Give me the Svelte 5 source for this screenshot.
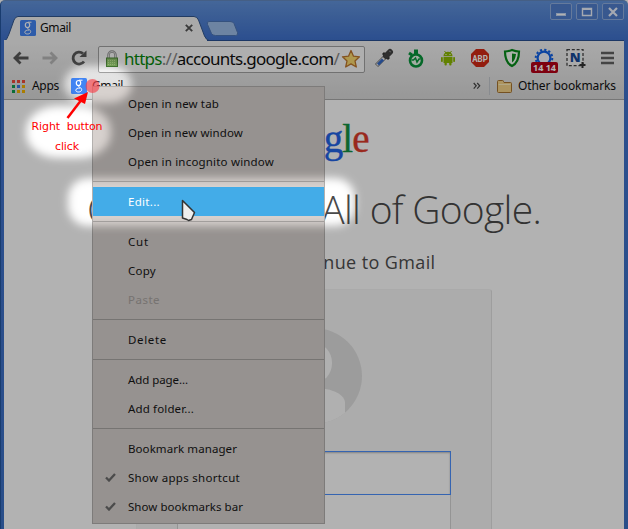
<script>
  const groups = [
    [
      { label: 'Open in new tab', w: 91 },
      { label: 'Open in new window', w: 115 },
      { label: 'Open in incognito window', w: 146 }
    ],
    [{ label: 'Edit...', w: 32, active: true }],
    [
      { label: 'Cut', w: 21 },
      { label: 'Copy', w: 28 },
      { label: 'Paste', w: 32, disabled: true }
    ],
    [{ label: 'Delete', w: 39 }],
    [
      { label: 'Add page...', w: 60 },
      { label: 'Add folder...', w: 66 }
    ],
    [
      { label: 'Bookmark manager', w: 109 },
      { label: 'Show apps shortcut', w: 112, checked: true },
      { label: 'Show bookmarks bar', w: 115, checked: true }
    ]
  ];
  const appColors = ['#f04a3c', '#f04a3c', '#f04a3c', '#0f9d50', '#3c78e8', '#f4b400', '#0f9d50', '#f4b400', '#f4b400'];

  // Tracks the label out so that it spans the given width.
  function fit(node, width) {
    const n = node.textContent.length;
    node.style.letterSpacing = (width - node.getBoundingClientRect().width) / n + 'px';
  }
</script>

{#snippet favicon()}
  <svg width="16" height="16" viewBox="0 0 16 16">
    <rect width="16" height="16" rx="1.5" fill="#4285f4" />
    <g fill="none" stroke="#fff">
      <ellipse cx="7.500" cy="5" rx="2.200" ry="2.500" stroke-width="1.200" />
      <path d="M8 2.200h3.500M8.500 7.300c-1.600 1-.6 1.600.5 2.200 1.500.8 2 1.700 1.500 2.900-.8 2.200-5.500 2.100-5.700 0-.1-1.800 2.200-2.500 4.200-2.300" stroke-width="1" />
    </g>
  </svg>
{/snippet}

<div class="window">
  <header>
    <svg class="tabs" width="250" height="25" viewBox="0 0 250 25">
      <path d="M0 25C3 24 3 22 5 18L10 4Q11.500 .5 14 .5H190Q193 .5 194.500 4L200.500 20Q202 24 206 25Z" fill="#f3f3f3" stroke="#31578f" />
      <path d="M205 5.500h21q3 0 4 2l3.500 9q1 3-2 3h-20q-3 0-4-2l-4-9q-1-3 1.500-3z" fill="#9dbde8" stroke="#4d76b5" />
    </svg>
    <div class="tab">{@render favicon()}<span use:fit={31}>Gmail</span>
      <svg width="8" height="8" viewBox="0 0 8 8"><path d="M.8.8 7.200 7.200M7.200.8.8 7.200" stroke="#555" stroke-width="1.900" /></svg>
    </div>
    <div class="controls">
      <i><svg viewBox="0 0 20 15"><rect x="5.500" y="9.500" width="9" height="2" fill="#fff" stroke="#c5d7f4" /></svg></i>
      <i><svg viewBox="0 0 20 15"><path d="M5.500 4.500h9v7h-9z" fill="none" stroke="#edf3fe" stroke-width="1.400" /><path d="M5 5h10" stroke="#edf3fe" stroke-width="2" /></svg></i>
      <i><svg viewBox="0 0 20 15"><path d="m6 4 8 8m0-8-8 8" stroke="#edf3fe" stroke-width="2.200" /></svg></i>
    </div>
  </header>

  <div class="chrome">
    <div class="toolbar">
      <svg class="nav" width="76" height="20" viewBox="0 0 76 20" fill="none" stroke-width="2.800">
        <path d="M17.500 10H4M9.500 4.500 4 10l5.500 5.500" stroke="#595959" />
        <path d="M31.500 10h14M39.500 4.500l5.500 5.500-5.500 5.500" stroke="#b9b9b9" />
        <path d="M73 13.500A6 6 0 1 1 72 5.500" stroke="#595959" />
        <path d="M75.500 2.500v6.500h-7z" fill="#595959" />
      </svg>
      <div class="url">
        <svg width="14" height="18" viewBox="0 0 14 18">
          <path d="M3.500 9V5a3.500 3.500 0 0 1 7 0v4" fill="none" stroke="#969696" stroke-width="2.500" />
          <path d="M3.500 9V5a3.500 3.500 0 0 1 7 0v4" fill="none" stroke="#ddd" />
          <rect x="1.500" y="8" width="11" height="8.500" fill="#8fc36c" stroke="#4f8839" />
          <path d="M3 10.500h8M3 12.500h8M3 14.500h8" stroke="#b8df8d" stroke-dasharray="1 1" />
        </svg>
        <span class="address" use:fit={215}><b>https</b><em>://</em>accounts.google.com<em>/</em></span>
        <svg class="star" width="20" height="20" viewBox="0 0 20 20"><path d="m10 1.500 2.500 5.700 6 .6-4.500 4.100 1.300 6.100L10 14.900 4.700 18 6 11.900 1.500 7.800l6-.6z" fill="#fbda70" stroke="#bd762d" stroke-width="1.300" stroke-linejoin="round" /></svg>
      </div>
      <div class="extensions">
        <svg width="20" height="20" viewBox="0 0 20 20">
          <path d="m2.500 17.500 9-9" stroke="#777" stroke-width="4.500" /><path d="m3 17 8-8" stroke="#f2f2f2" stroke-width="2.600" /><path d="m4 16.500 5-5" stroke="#3469c7" stroke-width="2.800" />
          <path d="m9 5 6 6" stroke="#333" stroke-width="2.800" /><path d="m12 8 4-4" stroke="#444" stroke-width="6" stroke-linecap="round" /><path d="m15 3 2 1" stroke="#888" />
        </svg>
        <svg width="20" height="20" viewBox="0 0 20 20" fill="none" stroke="#08963b">
          <circle cx="10" cy="12.500" r="6" fill="#e8f7e9" stroke-width="2.600" /><path d="M10 6V1.500" stroke-width="4" /><path d="m3 5 3 2" stroke-width="3" /><path d="M5.500 12h2l2-2 1.500 4 2-3h1.500" stroke-width="1.500" />
        </svg>
        <svg width="20" height="20" viewBox="0 0 20 20" fill="#8bb900">
          <path d="M5.500 8a4.500 4.200 0 0 1 9 0zM5.500 8.800h9V15h-9z" /><rect x="3" y="9" width="1.800" height="5" rx=".8" /><rect x="15.200" y="9" width="1.800" height="5" rx=".8" /><rect x="6.500" y="14" width="2.300" height="3.500" rx="1" /><rect x="11.200" y="14" width="2.300" height="3.500" rx="1" />
          <path d="m6.500 3 1.500 2m5.500-2-1.500 2" stroke="#8bb900" /><path d="M7.500 6.500h1m3 0h1" stroke="#fff" />
        </svg>
        <svg width="20" height="20" viewBox="0 0 20 20">
          <path d="M6 1h8l5 5v8l-5 5H6l-5-5V6z" fill="#d32a16" /><text x="2.200" y="13.500" textLength="15.600" lengthAdjust="spacingAndGlyphs" fill="#fff" font-family="Roboto" font-size="9.500" font-weight="700">ABP</text>
        </svg>
        <svg width="20" height="20" viewBox="0 0 20 20">
          <path d="M10 2q-4 1.500-7 1.500c0 8 2 12 7 14.500 5-2.500 7-6.500 7-14.500Q14 3.500 10 2z" fill="#f7fff7" stroke="#078b1b" stroke-width="2.200" /><path d="M10 5.500v9c2.500-2 3.500-4.500 4-8.500z" fill="#078b1b" />
        </svg>
        <div class="gear">
          <svg width="20" height="20" viewBox="0 0 20 20"><circle cx="10" cy="10" r="8.300" fill="none" stroke="#1262e8" stroke-width="2" stroke-dasharray="2.200 2.140" /><circle cx="10" cy="10" r="6.400" fill="#f5f7ff" stroke="#1262e8" stroke-width="2.200" /></svg>
          <span>14 14</span>
        </div>
        <svg width="20" height="20" viewBox="0 0 20 20">
          <rect x="1" y="1.700" width="16" height="16" fill="#f4f4f4" stroke="#444" stroke-width="1.300" stroke-dasharray="3 1.800" /><text x="3.800" y="14" font-family="Open Sans" font-weight="800" font-size="13" fill="#164a9a">N</text><path d="M16.500 14v6m-3-3h6" stroke="#333" stroke-width="2" />
        </svg>
      </div>
      <svg class="burger" width="14" height="14" viewBox="0 0 14 14"><path d="M0 2h13M0 7h13M0 12h13" stroke="#626262" stroke-width="2.500" /></svg>
    </div>
    <div class="bookmarks">
      <div class="apps">{#each appColors as color}<i style:background={color}></i>{/each}</div>
      <span use:fit={27}>Apps</span>
      <div class="gmail">{@render favicon()}<span use:fit={31}>Gmail</span></div>
      <div class="other">
        <svg width="8" height="8" viewBox="0 0 8 8"><path d="m.7 1 2.500 2.800L.7 6.600M4.200 1l2.500 2.800-2.500 2.800" fill="none" stroke="#444" stroke-width="1.200" /></svg>
        <hr />
        <svg class="folder" width="15" height="13" viewBox="0 0 15 13"><path d="M1.500 12.500q-1 0-1-1V1.500q0-1 1-1h4q1 0 1 1l.5 1h6.500q1 0 1 1v8q0 1-1 1z" fill="#f6d58a" stroke="#a87532" /><path d="M1.500 4.500h12" stroke="#fff0bf" /></svg>
        <span use:fit={98}>Other bookmarks</span>
      </div>
    </div>
  </div>

  <main>
    <div class="logo" use:fit={109}><span class="b">G</span><span class="r">o</span><span class="y">o</span><span class="b">g</span><span class="g">l</span><span class="r">e</span></div>
    <h1><span use:fit={454}>One account. All of Google.</span></h1>
    <h2><span use:fit={242}>Sign in to continue to Gmail</span></h2>
    <section>
      <svg width="96" height="96" viewBox="0 0 96 96">
        <defs><clipPath id="avatar"><circle cx="48" cy="48" r="48" /></clipPath></defs>
        <g clip-path="url(#avatar)"><path fill="#e0e0e0" d="M0 0h96v96H0z" /><ellipse cx="48" cy="35" rx="18" ry="20" fill="#fdfdfd" /><path d="M17 96V75c0-8 12-15 31-15s31 7 31 15v21z" fill="#fdfdfd" /></g>
      </svg>
      <div class="email"></div>
      <div class="password"></div>
    </section>
  </main>
</div>

<div class="menu">
  {#each groups as group}
    <div class="group">
      {#each group as item}
        <div class="item" class:active={item.active} class:disabled={item.disabled}>
          <div class="check">{#if item.checked}<svg width="11" height="9" viewBox="0 0 11 9"><path d="m1 4.500 3 3L10 1" fill="none" stroke="#6c6c6c" stroke-width="2.300" /></svg>{/if}</div>
          <span use:fit={item.w}>{item.label}</span>
        </div>
      {/each}
    </div>
  {/each}
</div>

<svg class="overlay" width="628" height="529" viewBox="0 0 628 529">
  <defs>
    <filter id="soft" x="-30%" y="-50%" width="160%" height="200%"><feGaussianBlur stdDeviation="4" /></filter>
    <mask id="spots" maskUnits="userSpaceOnUse" x="0" y="0" width="628" height="529">
      <path fill="#fff" d="M0 0h628v529H0z" />
      <g fill="#000" filter="url(#soft)">
        <rect x="64" y="66" width="68" height="37" rx="24" ry="18" />
        <rect x="26" y="106" width="85" height="52" rx="32" ry="24" />
        <rect x="68" y="178" width="287" height="48" rx="20" />
      </g>
    </mask>
  </defs>
  <path d="M0 0h628v529H0z" fill="#000" fill-opacity=".3" mask="url(#spots)" />
  <circle cx="92.500" cy="86" r="7" fill="#f83f48" fill-opacity=".65" />
  <path d="m67.500 118 13-17" stroke="#f00" stroke-width="2.500" />
  <path d="M88 92 74 98.500l11 5.500z" fill="#f00" />
  <path d="M182.500 200.500v17.500l4.500 1.500 1.500 1 3-1 3-7z" fill="#eee" stroke="#333" stroke-width="1.500" stroke-linejoin="round" />
</svg>
<div class="note"><span use:fit={71}>Right&nbsp; button</span><span use:fit={24}>click</span></div>

<style>
  :global(body) { margin: 0; overflow: hidden; }
  * { box-sizing: border-box; }
  svg { display: block; flex: none; }
  span { white-space: nowrap; }
  .window { width: 628px; height: 529px; padding: 0 4px 0 3px; border-left: 1px solid #24569f; border-top: 1px solid #6389bf; border-radius: 5px 5px 0 0; font: 12px/16px "Noto Sans", sans-serif; color: #111; background: linear-gradient(#6293db, #3f71cc 39px, #3c70c5); display: flex; flex-direction: column; }
  header { height: 39px; display: flex; position: relative; flex: none; }
  .tabs { position: absolute; left: 0; top: 15px; }
  .tab { position: relative; display: flex; align-items: center; width: 173px; height: 24px; margin: 15px 0 0 16px; }
  .tab span { margin-left: 4px; }
  .tab > svg:last-child { margin-left: auto; }
  .controls { margin: 2px 0 0 auto; display: flex; gap: 4px; }
  .controls i { width: 22px; height: 17px; border: 1px solid #91afe0; border-radius: 2px; background: #517fcd; }
  .chrome { height: 60px; flex: none; background: linear-gradient(#f3f3f3, #dadada); border-top: 1px solid #294f91; border-bottom: 1px solid #aaa; position: relative; }
  .chrome::before { content: ""; position: absolute; left: 0; top: -1px; width: 203px; height: 1px; background: #f3f3f3; }
  .toolbar { height: 33px; display: flex; align-items: center; padding: 3px 0 0 7px; }
  .nav { margin: -2px 11px 0 0; }
  .url { width: 267px; height: 27px; border: 1px solid #a3a3a3; border-radius: 2px; background: #fbfbfb; display: flex; align-items: center; padding-left: 6px; flex: none; }
  .address { font-size: 17px; line-height: 23px; margin: -2px 0 0 5px; }
  .address b { font-weight: 400; color: #07880b; }
  .address em { font-style: normal; color: #888; }
  .star { margin: -1px 0 0 2px; }
  .extensions { display: flex; gap: 12px; margin: -3px 0 0 9px; }
  .gear { position: relative; width: 20px; height: 20px; }
  .gear span { position: absolute; left: -3px; top: 14px; width: 27px; height: 11px; border-radius: 2px; background: #b50016; color: #fff; font: 700 9px/11px "Noto Sans", sans-serif; text-align: center; }
  .burger { margin: -2px 0 0 15px; }
  .bookmarks { display: flex; align-items: center; height: 24px; padding: 0 8px; }
  .apps { display: grid; grid-template-columns: repeat(3, 3px); gap: 2px; margin-right: 7px; }
  .apps i { width: 3px; height: 3px; }
  .gmail { display: flex; align-items: center; gap: 5px; margin-left: 12px; }
  .other { display: flex; align-items: center; margin-left: auto; }
  hr { width: 1px; height: 18px; border: 0; background: #c3c7cd; margin: 0 7px 0 8px; }
  .folder { margin-right: 6px; }
  main { flex: 1; min-height: 0; overflow: hidden; background: #fff; display: flex; flex-direction: column; align-items: center; color: #555; }
  .logo { font: 39px/44px "Liberation Serif", serif; margin: 17px 0 1px; white-space: nowrap; }
  .logo span { -webkit-text-stroke: .4px currentColor; }
  .b { color: #2264e7; }
  .r { color: #dc3c2b; }
  .y { color: #efb123; }
  .g { color: #149344; }
  h1 { font: 300 39px/50px "Open Sans", sans-serif; margin: 22px 0 0; width: 454px; white-space: nowrap; color: #494949; }
  h2 { font: 400 18px/24px "Open Sans", sans-serif; margin: 16px 0 0; width: 241px; white-space: nowrap; color: #4e4e4e; }
  section { width: 356px; flex: none; height: 330px; margin-top: 15px; border: 1px solid #f4f4f4; border-right-color: #e2e2e2; border-radius: 3px; background: #f7f7f7; padding-top: 38px; display: flex; flex-direction: column; align-items: center; }
  .email { width: 274px; height: 44px; margin-top: 27px; border: 1px solid #4d90fe; background: #fff; box-shadow: inset 0 1px 2px #bbb; flex: none; }
  .password { width: 274px; height: 44px; flex: none; border: 1px solid #d5d5d5; border-top: 0; background: #fff; }
  .menu { position: absolute; left: 92px; top: 86px; width: 233px; height: 438px; padding: 2px 0; background: #d7d1ce; border: 1px solid #b4b1af; font: 11.500px/29px "Noto Sans", sans-serif; color: #161616; }
  .group + .group { padding-top: 11px; background: linear-gradient(#aaa6a4, #aaa6a4) 0 5px / 100% 1px no-repeat; }
  .item { height: 29px; display: flex; align-items: center; }
  .check { width: 35px; padding-left: 12px; flex: none; }
  .active { background: #43ace8; color: #fff; }
  .disabled { color: #aaa5a2; }
  .overlay { position: absolute; left: 0; top: 0; }
  .note { position: absolute; left: 31px; top: 117px; width: 72px; display: flex; flex-direction: column; align-items: center; font: 11px/20px "DejaVu Sans", sans-serif; color: #f00; }
</style>
